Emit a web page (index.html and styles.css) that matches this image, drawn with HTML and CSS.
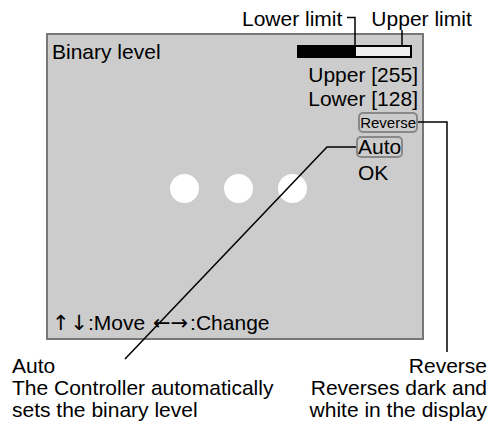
FILE: index.html
```html
<!DOCTYPE html>
<html lang="en">
<head>
	<meta charset="UTF-8">
	<title>Binary level</title>
	<link rel="stylesheet" href="styles.css">
</head>
<body>
	<div class="limits">
		<span>Lower limit</span>
		<span>Upper limit</span>
	</div>
	<div class="screen">
		<div class="main">
			<div class="stage">
				<div class="title">Binary level</div>
				<div class="dots">
					<span></span>
					<span></span>
					<span></span>
				</div>
			</div>
			<div class="menu">
				<div class="bar"><span style="width: 51%"></span></div>
				<div class="val">Upper [255]</div>
				<div class="val">Lower [128]</div>
				<div class="rev">Reverse</div>
				<div class="opt sel">Auto</div>
				<div class="opt">OK</div>
			</div>
		</div>
		<div class="help"><span class="arr arr-v">↑ ↓</span>:Move <span class="arr arr-h">←→</span>:Change</div>
	</div>
	<div class="notes">
		<div class="note-l">Auto<br>The Controller automatically<br>sets the binary level</div>
		<div class="note-r">Reverse<br>Reverses dark and<br>white in the display</div>
	</div>
	<!-- callout lines -->
	<svg class="leaders" width="488" height="430" viewBox="0 0 488 430">
		<polyline points="347,17.5 355,17.5 355,45"/>
		<polyline points="402,30 402,45"/>
		<polyline points="418,122 447,122 447,352"/>
		<polyline points="356,147 327,147 125,359"/>
	</svg>
</body>
</html>
```

FILE: styles.css
```css
* {margin: 0;padding: 0;box-sizing: border-box;}
body {position: relative;width: 488px;height: 430px;overflow: hidden;background: #fff;color: #000;font-family: "Liberation Sans", Arial, sans-serif;font-size: 21px;line-height: 24px;}
.limits {display: flex;gap: 29px;height: 33px;padding: 7px 0 0 242px;}
.screen {display: flex;flex-direction: column;width: 378px;height: 307px;margin-left: 46px;padding: 5px 4px 3px 4px;background: #ccc;border: 2px solid #777;}
.main {display: flex;flex: 1;}
.stage {flex: 1;min-width: 0;}
.dots {display: flex;gap: 25px;margin-top: 110px;padding-left: 118px;}
.dots span {flex: none;width: 29px;height: 29px;background: #fff;border-radius: 50%;}
.menu {display: flex;flex: none;flex-direction: column;width: 121px;}
.bar {width: 115px;height: 13px;margin: 5px 0 5px;background: #eee;border: 2px solid #000;}
.bar span {display: block;height: 100%;background: #000;}
.val {text-align: right;}
.rev {align-self: flex-end;margin-top: 1px;padding: 1px 0 0;font-size: 15px;line-height: 16px;border: 2px solid #888;border-radius: 5px;}
.opt {align-self: flex-start;margin-left: 59px;border: 2px solid transparent;border-radius: 5px;line-height: 18px;}
.opt.sel {margin-top: 3px;border-color: #888;}
.opt + .opt {margin-top: 2px;line-height: 22px;}
.help {white-space: nowrap;}
.arr {font-family: "DejaVu Sans", sans-serif;}
.arr-v {word-spacing: -6px;}
.arr-h {margin: 0 2px;}
.notes {display: flex;justify-content: space-between;margin-top: 15px;padding: 0 1px 0 12px;line-height: 22px;}
.note-r {text-align: right;}
.leaders {position: absolute;top: 0;left: 0;pointer-events: none;}
.leaders polyline {fill: none;stroke: #000;stroke-width: 1.5;}
```
